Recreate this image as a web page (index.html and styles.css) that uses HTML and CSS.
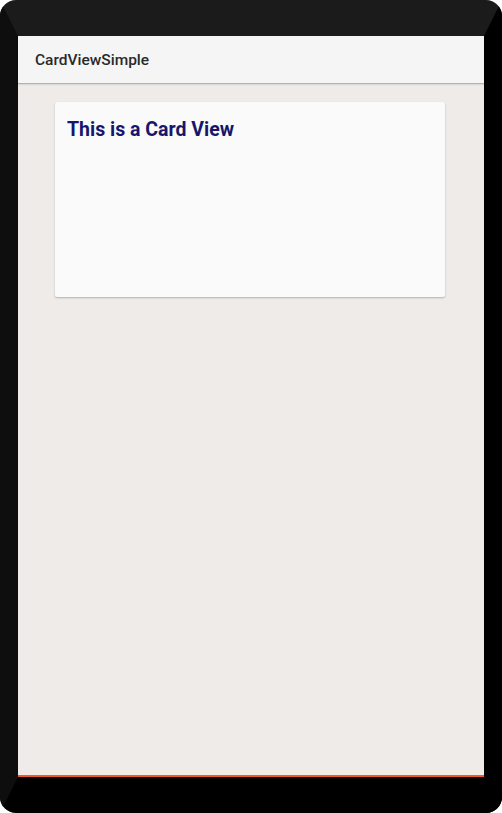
FILE: index.html
```html
<!DOCTYPE html>
<html>
<head>
<meta charset="utf-8">
<link rel="stylesheet" href="styles.css">
</head>
<body>
<div class="device">
  <div class="screen">
    <header class="appbar"><span class="apptitle">CardViewSimple</span></header>
    <main class="content">
      <section class="card">
        <h1 class="card-title">This is a Card View</h1>
      </section>
    </main>
    <div class="accent"></div>
  </div>
</div>
</body>
</html>
```
FILE: styles.css
```css
html, body { margin: 0; padding: 0; }
body { width: 502px; height: 813px; overflow: hidden; background: #fff; font-family: Roboto, "Noto Sans", sans-serif; }
.device {
  box-sizing: border-box;
  width: 502px; height: 813px;
  border-style: solid;
  border-width: 36px 18px 36px 18px;
  border-color: #1b1b1b #000 #000 #0e0e0e;
  border-radius: 16px;
  background: #000;
}
.screen {
  width: 466px; height: 741px;
  display: flex; flex-direction: column;
  background: #efebe8;
}
.appbar {
  height: 47px;
  flex: none;
  background: #f5f5f5;
  display: flex; align-items: center;
  padding-left: 17px;
  box-shadow: 0 1px 1px rgba(0,0,0,0.2), 0 2px 2px rgba(0,0,0,0.06);
  position: relative; z-index: 1;
}
.apptitle { font-size: 15.5px; font-weight: 500; color: #2a2a2a; }
.content { flex: 1; padding: 19px 39px 0 37px; }
.card {
  height: 195px;
  background: #fafafa;
  border-radius: 2px;
  box-shadow: 0 1px 2px rgba(0,0,0,0.25);
  padding: 16px 12px;
  box-sizing: border-box;
}
.card-title { margin: 0; font-size: 19.5px; font-weight: 700; color: #16166a; line-height: 24px; }
.accent { height: 2px; background: #f0582a; flex: none; }
```
